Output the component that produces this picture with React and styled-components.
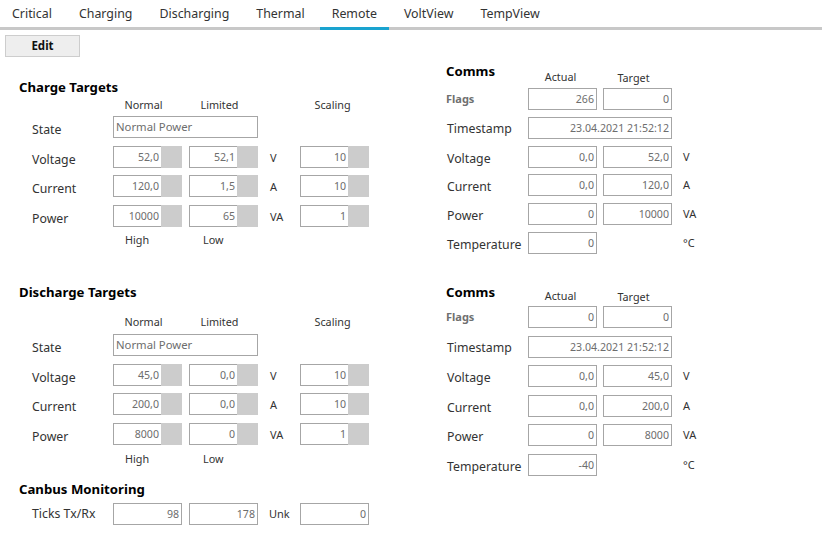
import React from "react";
import styled, { createGlobalStyle, css } from "styled-components";

const GlobalStyle = createGlobalStyle`
  html, body { margin: 0; padding: 0; background: #ffffff; }
  body { font-family: "Segoe UI", "Noto Sans", "Open Sans", sans-serif; color: #333333; }
`;

const Page = styled.div`
  width: 822px;
  height: 543px;
  overflow: hidden;
  background: #ffffff;
`;

const TabBar = styled.div`
  display: flex;
  gap: 3px;
  height: 27px;
  border-bottom: 3px solid #c8c8c8;
`;

const Tab = styled.div`
  position: relative;
  padding: 0 12px;
  font-size: 12.4px;
  line-height: 27px;
  color: #333333;
  white-space: nowrap;
  ${(p) =>
    p.$active &&
    css`
      &::after {
        content: "";
        position: absolute;
        left: 0;
        right: 0;
        bottom: -3px;
        height: 3px;
        background: #1aa3cf;
      }
    `}
`;

const Toolbar = styled.div`
  display: flex;
  padding: 5px 0 0 5px;
`;

const EditButton = styled.button`
  width: 75px;
  height: 22px;
  box-sizing: border-box;
  border: 1px solid #cdcdcd;
  background: #eeeeee;
  font-family: inherit;
  font-weight: 700;
  font-size: 11.5px;
  line-height: 20px;
  color: #111111;
  padding: 0;
`;

const Band = styled.div`
  display: grid;
  grid-template-columns: 446px 1fr;
  align-items: start;
  margin-top: ${(p) => p.$top}px;
`;

const Column = styled.div`
  display: flex;
  flex-direction: column;
  padding-left: ${(p) => p.$left || 0}px;
  padding-top: ${(p) => p.$top || 0}px;
`;

const SectionTitle = styled.div`
  font-weight: 700;
  font-size: 13.2px;
  line-height: 17px;
  color: #000000;
  white-space: nowrap;
  margin-top: ${(p) => p.$top || 0}px;
`;

const FormGrid = styled.div`
  display: grid;
  margin-left: ${(p) => p.$indent || 0}px;
  margin-top: ${(p) => p.$top || 0}px;
  grid-template-columns: ${(p) => p.$cols};
  grid-template-rows: ${(p) => p.$rows};
  column-gap: ${(p) => p.$gap}px;
`;

const GridTitle = styled(SectionTitle)`
  align-self: start;
`;

const Header = styled.div`
  align-self: end;
  text-align: center;
  font-size: 10.8px;
  line-height: 14px;
  color: #333333;
  padding-bottom: ${(p) => p.$pad}px;
  padding-right: ${(p) => p.$shift || 0}px;
  white-space: nowrap;
`;

const Footer = styled.div`
  font-size: 10.8px;
  line-height: 12px;
  color: #333333;
  padding-left: ${(p) => p.$left}px;
`;

const Label = styled.div`
  align-self: start;
  font-size: 12.3px;
  line-height: 22px;
  color: #333333;
  padding-top: ${(p) => p.$dy || 0}px;
  padding-left: ${(p) => p.$left || 0}px;
  white-space: nowrap;
  ${(p) =>
    p.$flag &&
    css`
      font-weight: 700;
      font-size: 11px;
      color: #707070;
    `}
`;

const Unit = styled.div`
  align-self: start;
  font-size: 11px;
  line-height: 22px;
  color: #333333;
  padding-left: ${(p) => p.$left || 0}px;
  padding-top: ${(p) => p.$dy || 0}px;
  white-space: nowrap;
`;

const Box = styled.div`
  grid-column: ${(p) => (p.$span ? `span ${p.$span}` : "auto")};
  align-self: start;
  display: flex;
  height: 22px;
  box-sizing: border-box;
  border: 1px solid #a6a6a6;
  background: #ffffff;
`;

const Value = styled.span`
  flex: 1;
  min-width: 0;
  text-align: ${(p) => (p.$left ? "left" : "right")};
  padding: 0 2px;
  font-size: ${(p) => (p.$left ? 11.3 : 10.6)}px;
  line-height: 20px;
  color: #6d6d6d;
  white-space: nowrap;
  overflow: hidden;
`;

const Spin = styled.span`
  flex: none;
  width: 21px;
  margin: -1px -1px -1px 0;
  background: #cccccc;
`;

const Empty = styled.div``;

const Field = ({ value, spin, span, left }) => (
  <Box $span={span}>
    <Value $left={left}>{value}</Value>
    {spin && <Spin />}
  </Box>
);

const LEFT_COLS = "74px 69px 69px 28px 69px";
const RIGHT_COLS = "76px 69px 69px 40px";

const TargetSection = ({ title, titleTop, rows, headRow, pitch, headPad }) => (
  <>
    <SectionTitle $top={titleTop}>{title}</SectionTitle>
    <FormGrid
      $indent={13}
      $cols={LEFT_COLS}
      $gap={7}
      $rows={`${headRow}px repeat(4, ${pitch}px) 12px`}
    >
      <Empty />
      <Header $pad={headPad} $shift={8}>Normal</Header>
      <Header $pad={headPad} $shift={8}>Limited</Header>
      <Empty />
      <Header $pad={headPad} $shift={4}>Scaling</Header>

      <Label $dy={3}>State</Label>
      <Field value="Normal Power" span={2} left />
      <Empty />
      <Empty />

      {rows.map((r) => (
        <React.Fragment key={r.label}>
          <Label $dy={3}>{r.label}</Label>
          <Field value={r.normal} spin />
          <Field value={r.limited} spin />
          <Unit $left={5} $dy={1}>{r.unit}</Unit>
          <Field value={r.scale} spin />
        </React.Fragment>
      ))}

      <Empty />
      <Footer $left={12}>High</Footer>
      <Footer $left={14}>Low</Footer>
    </FormGrid>
  </>
);

const CommsSection = ({ data, headRow, pitch, headPad }) => (
  <FormGrid
    $cols={RIGHT_COLS}
    $gap={6}
    $rows={`${headRow}px repeat(5, ${pitch}px) 22px`}
  >
    <GridTitle>Comms</GridTitle>
    <Header $pad={headPad} $shift={4}>Actual</Header>
    <Header $pad={headPad - 1} $shift={8}>Target</Header>
    <Empty />

    <Label $flag $dy={0}>Flags</Label>
    <Field value={data.flags[0]} />
    <Field value={data.flags[1]} />
    <Empty />

    <Label $dy={1} $left={1}>Timestamp</Label>
    <Field value={data.ts} span={2} />
    <Empty />

    {data.rows.map((r) => (
      <React.Fragment key={r.label}>
        <Label $dy={2} $left={1}>{r.label}</Label>
        <Field value={r.actual} />
        {r.target !== undefined ? <Field value={r.target} /> : <Empty />}
        <Unit $left={5} $dy={0}>{r.unit}</Unit>
      </React.Fragment>
    ))}
  </FormGrid>
);

const chargeRows = [
  { label: "Voltage", normal: "52,0", limited: "52,1", unit: "V", scale: "10" },
  { label: "Current", normal: "120,0", limited: "1,5", unit: "A", scale: "10" },
  { label: "Power", normal: "10000", limited: "65", unit: "VA", scale: "1" },
];

const dischargeRows = [
  { label: "Voltage", normal: "45,0", limited: "0,0", unit: "V", scale: "10" },
  { label: "Current", normal: "200,0", limited: "0,0", unit: "A", scale: "10" },
  { label: "Power", normal: "8000", limited: "0", unit: "VA", scale: "1" },
];

const comms1 = {
  flags: ["266", "0"],
  ts: "23.04.2021 21:52:12",
  rows: [
    { label: "Voltage", actual: "0,0", target: "52,0", unit: "V" },
    { label: "Current", actual: "0,0", target: "120,0", unit: "A" },
    { label: "Power", actual: "0", target: "10000", unit: "VA" },
    { label: "Temperature", actual: "0", unit: "°C" },
  ],
};

const comms2 = {
  flags: ["0", "0"],
  ts: "23.04.2021 21:52:12",
  rows: [
    { label: "Voltage", actual: "0,0", target: "45,0", unit: "V" },
    { label: "Current", actual: "0,0", target: "200,0", unit: "A" },
    { label: "Power", actual: "0", target: "8000", unit: "VA" },
    { label: "Temperature", actual: "-40", unit: "°C" },
  ],
};

const tabs = ["Critical", "Charging", "Discharging", "Thermal", "Remote", "VoltView", "TempView"];

export default function App() {
  return (
    <Page>
      <GlobalStyle />
      <TabBar>
        {tabs.map((t) => (
          <Tab key={t} $active={t === "Remote"}>
            {t}
          </Tab>
        ))}
      </TabBar>
      <Toolbar>
        <EditButton>Edit</EditButton>
      </Toolbar>

      <Band $top={0}>
        <Column $left={19} $top={21.5}>
          <TargetSection
            title="Charge Targets"
            rows={chargeRows}
            headRow={20.5}
            pitch={29.5}
            headPad={4}
          />
        </Column>
        <Column $top={6}>
          <CommsSection data={comms1} headRow={25} pitch={28.8} headPad={4} />
        </Column>
      </Band>

      <Band $top={30}>
        <Column $left={19}>
          <TargetSection
            title="Discharge Targets"
            rows={dischargeRows}
            headRow={33}
            pitch={29.7}
            headPad={5}
          />
        </Column>
        <Column>
          <CommsSection data={comms2} headRow={22.5} pitch={29.5} headPad={3} />
        </Column>
      </Band>

      <Column $left={19}>
        <SectionTitle $top={5}>Canbus Monitoring</SectionTitle>
        <FormGrid $indent={13} $top={5} $cols={LEFT_COLS} $gap={7} $rows="22px">
          <Label $dy={0}>Ticks Tx/Rx</Label>
          <Field value="98" />
          <Field value="178" />
          <Unit $left={4}>Unk</Unit>
          <Field value="0" />
        </FormGrid>
      </Column>
    </Page>
  );
}
